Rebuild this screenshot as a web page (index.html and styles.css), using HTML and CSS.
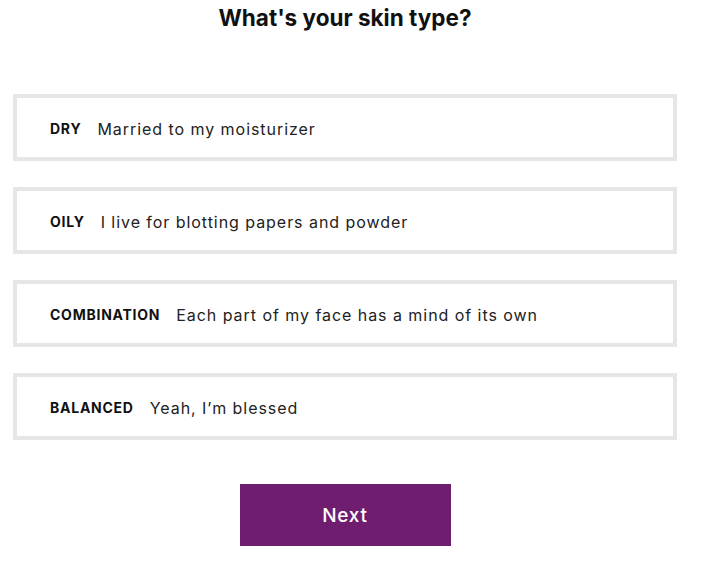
FILE: index.html
```html
<!DOCTYPE html>
<html lang="en">
<head>
  <meta charset="UTF-8" />
  <title>Skin Type</title>
  <link rel="stylesheet" href="styles.css">
</head>
<body>
  <div class="quiz">
    <h2 class="quiz-title">What's your skin type?</h2>
    <div class="options">
      <div class="option"><span class="option-name">DRY</span><span class="option-desc">Married to my moisturizer</span></div>
      <div class="option"><span class="option-name">OILY</span><span class="option-desc">I live for blotting papers and powder</span></div>
      <div class="option"><span class="option-name">COMBINATION</span><span class="option-desc">Each part of my face has a mind of its own</span></div>
      <div class="option"><span class="option-name">BALANCED</span><span class="option-desc">Yeah, I’m blessed</span></div>
    </div>
    <div class="actions">
      <button class="next-btn">Next</button>
    </div>
  </div>
</body>
</html>
```

FILE: styles.css
```css
body {
  margin: 0;
  font-family: Inter, 'Liberation Sans', sans-serif;
  color: #111;
  background: #fff;
}

.quiz {
  width: 664px;
  padding-left: 13px;
}

.quiz-title {
  margin: 0;
  padding-top: 4px;
  height: 90px;
  text-align: center;
  font-size: 22.5px;
  font-weight: 700;
  line-height: 27px;
}

.options {
  display: flex;
  flex-direction: column;
  gap: 26px;
}

.option {
  height: 57px;
  border: 4px solid #e6e6e6;
  display: flex;
  align-items: center;
  padding-left: 33px;
  padding-top: 2px;
}

.option-name {
  font-size: 14px;
  font-weight: 700;
  margin-right: 16px;
  letter-spacing: 0.75px;
}

.option-desc {
  font-size: 16px;
  letter-spacing: 0.95px;
  color: #222;
}

.actions {
  display: flex;
  justify-content: center;
  margin-top: 44px;
}

.next-btn {
  width: 211px;
  height: 62px;
  border: none;
  background: #6f1d6e;
  color: #fff;
  font-family: Inter, 'Liberation Sans', sans-serif;
  font-size: 19px;
  font-weight: 500;
  letter-spacing: 0.8px;
}
```
